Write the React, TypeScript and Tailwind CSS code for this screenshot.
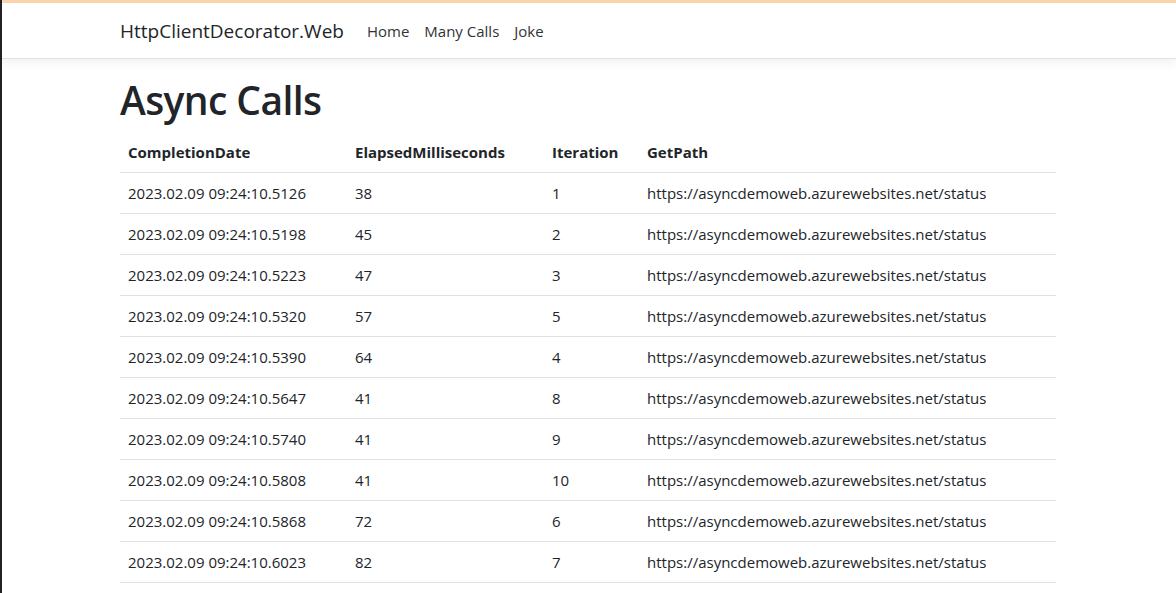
const rows = [
  { date: "2023.02.09 09:24:10.5126", ms: 38, it: 1 },
  { date: "2023.02.09 09:24:10.5198", ms: 45, it: 2 },
  { date: "2023.02.09 09:24:10.5223", ms: 47, it: 3 },
  { date: "2023.02.09 09:24:10.5320", ms: 57, it: 5 },
  { date: "2023.02.09 09:24:10.5390", ms: 64, it: 4 },
  { date: "2023.02.09 09:24:10.5647", ms: 41, it: 8 },
  { date: "2023.02.09 09:24:10.5740", ms: 41, it: 9 },
  { date: "2023.02.09 09:24:10.5808", ms: 41, it: 10 },
  { date: "2023.02.09 09:24:10.5868", ms: 72, it: 6 },
  { date: "2023.02.09 09:24:10.6023", ms: 82, it: 7 },
];

const url = "https://asyncdemoweb.azurewebsites.net/status";

export default function App() {
  return (
    <div className="h-[593px] overflow-hidden bg-white border-l-2 border-[#222] font-['Open_Sans',sans-serif] text-[#212529]">
      <div className="h-[3px] bg-[#fbd6ac]" />
      <nav className="h-[56px] border-b border-[#dee2e6] shadow-[0_4px_10px_rgba(0,0,0,0.06)] bg-white relative">
        <div className="w-[936px] flex items-center h-full pt-[2px] ml-[118px]">
          <span className="text-[19px] mr-[23px]">HttpClientDecorator.Web</span>
          <div className="flex gap-[15px] text-[15px] text-[#333]">
            <span>Home</span>
            <span>Many Calls</span>
            <span>Joke</span>
          </div>
        </div>
      </nav>
      <main className="w-[936px] ml-[118px] pt-[18px]">
        <h1 className="text-[39px] font-semibold leading-[1.2] mb-[8px] tracking-[-0.6px]">Async Calls</h1>
        <table className="w-full border-collapse text-[15px]">
          <thead>
            <tr className="border-b border-[#dee2e6] h-[41px] text-left">
              <th className="w-[227px] px-[8px] font-bold">CompletionDate</th>
              <th className="w-[197px] px-[8px] font-bold">ElapsedMilliseconds</th>
              <th className="w-[95px] px-[8px] font-bold">Iteration</th>
              <th className="px-[8px] font-bold">GetPath</th>
            </tr>
          </thead>
          <tbody>
            {rows.map((r) => (
              <tr key={r.date} className="border-b border-[#dee2e6] h-[41px]">
                <td className="px-[8px]">{r.date}</td>
                <td className="px-[8px]">{r.ms}</td>
                <td className="px-[8px]">{r.it}</td>
                <td className="px-[8px]">{url}</td>
              </tr>
            ))}
          </tbody>
        </table>
      </main>
    </div>
  );
}
